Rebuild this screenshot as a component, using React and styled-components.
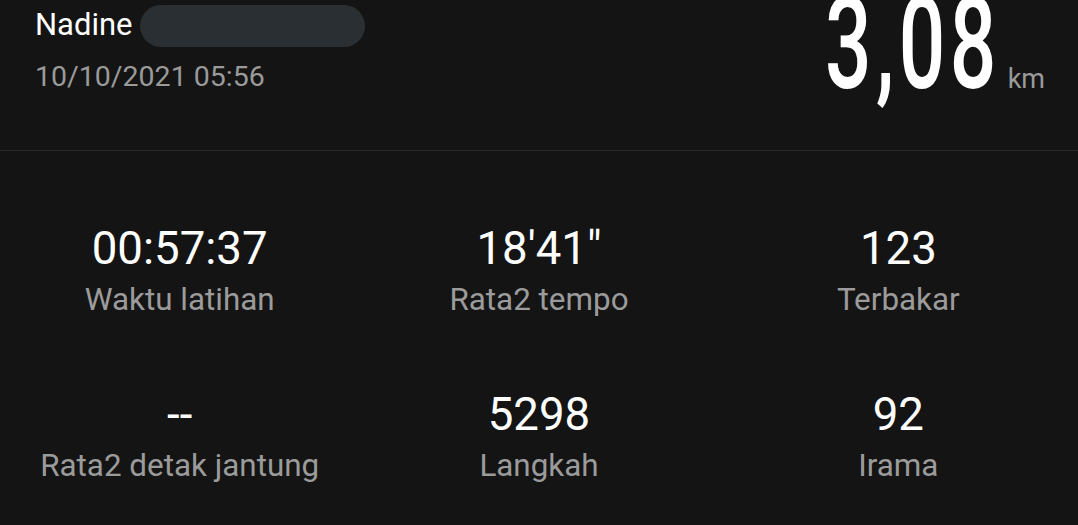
import React from 'react';
import styled, { createGlobalStyle } from 'styled-components';

const GlobalStyle = createGlobalStyle`
  html, body {
    margin: 0;
    padding: 0;
    background: #141414;
  }
  body {
    font-family: Roboto, "Noto Sans", sans-serif;
  }
`;

const Screen = styled.div`
  width: 1078px;
  height: 525px;
  background: #141414;
  overflow: hidden;
`;

const Header = styled.header`
  height: 150px;
  border-bottom: 1px solid #2a2a2a;
  display: flex;
  justify-content: space-between;
  padding: 0 33px 0 35px;
  overflow: hidden;
`;

const Owner = styled.div`
  display: flex;
  flex-direction: column;
  padding-top: 3px;
`;

const NameRow = styled.div`
  display: flex;
  align-items: center;
  gap: 7px;
`;

const Name = styled.span`
  color: #ffffff;
  font-size: 31px;
  line-height: 40px;
`;

const Redacted = styled.span`
  width: 225px;
  height: 42px;
  border-radius: 21px;
  background: #2a2f33;
  margin-top: 2px;
`;

const Date = styled.span`
  color: #9a9a9a;
  font-size: 28.5px;
  line-height: 40px;
  margin-top: 10px;
`;

const Distance = styled.div`
  display: flex;
  align-items: baseline;
  margin-top: -20px;
`;

const BigNumber = styled.span`
  display: inline-block;
  color: #ffffff;
  font-size: 128px;
  font-weight: 500;
  line-height: 128px;
  letter-spacing: 7px;
  transform: scaleX(0.64);
  transform-origin: right center;
  margin-right: -4.5px;
`;

const Unit = styled.span`
  color: #9a9a9a;
  font-size: 27px;
  margin-left: 11px;
`;

const Stats = styled.section`
  display: grid;
  grid-template-columns: repeat(3, 1fr);
  row-gap: 69px;
  padding-top: 72px;
`;

const Stat = styled.div`
  display: flex;
  flex-direction: column;
  align-items: center;
`;

const Value = styled.span`
  color: #ffffff;
  font-size: 45.6px;
  line-height: 52px;
`;

const Label = styled.span`
  color: #9b9b9b;
  font-size: 31.4px;
  line-height: 40px;
  margin-top: 5px;
`;

const stats = [
  { value: '00:57:37', label: 'Waktu latihan' },
  { value: '18\'41"', label: 'Rata2 tempo' },
  { value: '123', label: 'Terbakar' },
  { value: '--', label: 'Rata2 detak jantung' },
  { value: '5298', label: 'Langkah' },
  { value: '92', label: 'Irama' },
];

const App = () => {
  return (
    <Screen>
      <GlobalStyle />
      <Header>
        <Owner>
          <NameRow>
            <Name>Nadine</Name>
            <Redacted />
          </NameRow>
          <Date>10/10/2021 05:56</Date>
        </Owner>
        <Distance>
          <BigNumber>3,08</BigNumber>
          <Unit>km</Unit>
        </Distance>
      </Header>
      <Stats>
        {stats.map((s) => (
          <Stat key={s.label}>
            <Value>{s.value}</Value>
            <Label>{s.label}</Label>
          </Stat>
        ))}
      </Stats>
    </Screen>
  );
};

export default App;
